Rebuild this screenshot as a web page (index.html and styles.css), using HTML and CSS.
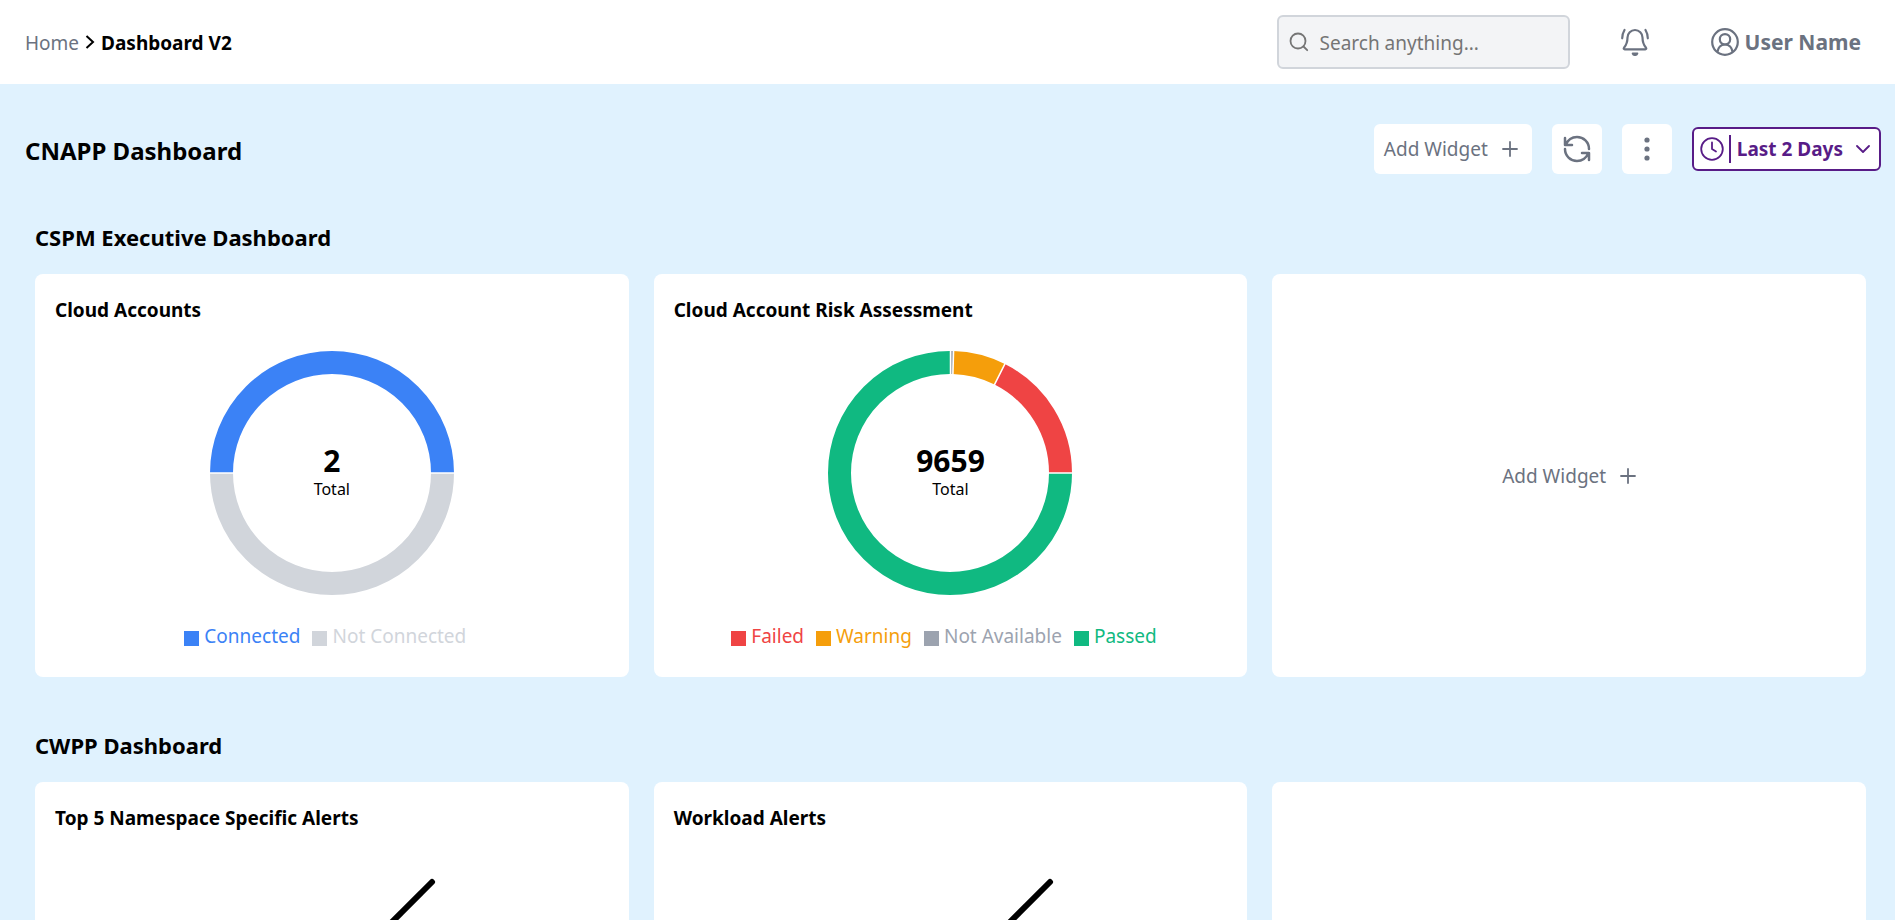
FILE: index.html
```html
<!DOCTYPE html>
<html lang="en">
<head>
<meta charset="utf-8">
<meta name="viewport" content="width=device-width, initial-scale=1">
<title>Dashboard V2</title>
<link rel="stylesheet" href="styles.css">
</head>
<body>
<header class="topbar">
  <nav class="breadcrumb" aria-label="Breadcrumb">
    <a class="crumb" href="#">Home</a>
    <svg class="crumb-arrow" viewBox="0 0 10 16" aria-hidden="true"><path d="M1.500 1 8 7 1.500 13" fill="none" stroke="currentColor" stroke-width="2"/></svg>
    <span class="crumb-current">Dashboard V2</span>
  </nav>
  <div class="topbar-tools">
    <label class="search">
      <svg class="icon-search" viewBox="0 0 20 20" fill="none" stroke="currentColor" stroke-width="1.800" stroke-linecap="round" aria-hidden="true"><circle cx="9" cy="9" r="7.500"/><path d="m14.500 14.500 3.700 3.700"/></svg>
      <input class="search-input" type="text" placeholder="Search anything..." aria-label="Search anything">
    </label>
    <button class="bell" type="button" aria-label="Notifications">
      <svg class="icon-28" viewBox="0 0 28 28" fill="none" stroke="currentColor" stroke-width="2.200" stroke-linecap="round" stroke-linejoin="round" aria-hidden="true"><path d="M14 2a7.500 7.500 0 0 0-7.500 7.500c0 6-2 8.500-3.500 10.300-.6.8-.2 1.500.7 1.500h20.600c.9 0 1.300-.7.7-1.500-1.500-1.800-3.500-4.300-3.500-10.300A7.500 7.500 0 0 0 14 2z"/><path d="M3.500 2C2 4.500 1.200 7 1.200 10.300M24.500 2C26 4.500 26.800 7 26.800 10.300M11.800 25.500c.8 1.900 3.600 1.900 4.400 0z"/></svg>
    </button>
    <button class="user" type="button">
      <svg class="icon-28" viewBox="0 0 28 28" fill="none" stroke="currentColor" stroke-width="2.200" aria-hidden="true"><circle cx="14" cy="14" r="12.800"/><circle cx="14" cy="11.300" r="5.200"/><path d="M6.300 24.200c.8-4.700 3.800-7.700 7.700-7.700s6.900 3 7.700 7.700"/></svg>
      User Name
    </button>
  </div>
</header>
<main class="page">
  <div class="page-head">
    <h1 class="page-title">CNAPP Dashboard</h1>
    <div class="actions">
      <button class="action action-add" type="button">Add Widget
        <svg class="icon-plus" viewBox="0 0 16 16" stroke="currentColor" stroke-width="1.800" stroke-linecap="round" aria-hidden="true"><path d="M8 1v14M1 8h14"/></svg>
      </button>
      <button class="action action-icon" type="button" aria-label="Refresh">
        <svg class="icon-28" viewBox="0 0 28 28" fill="none" stroke="currentColor" stroke-width="2.500" stroke-linecap="round" stroke-linejoin="round" aria-hidden="true"><path d="M2 3v7h7M2.500 10C5 4.500 9 2 14 2c6.500 0 12 5 12 12M26 25v-7h-7M25.500 18C23 23.500 19 26 14 26 7.500 26 2 21 2 14"/></svg>
      </button>
      <button class="action action-icon" type="button" aria-label="More options">
        <svg class="icon-28" viewBox="0 0 28 28" fill="currentColor" aria-hidden="true"><circle cx="14" cy="5" r="2.600"/><circle cx="14" cy="14" r="2.600"/><circle cx="14" cy="23" r="2.600"/></svg>
      </button>
      <button class="range" type="button">
        <svg class="icon-clock" viewBox="0 0 24 24" fill="none" stroke="currentColor" stroke-width="1.800" stroke-linecap="round" stroke-linejoin="round" aria-hidden="true"><circle cx="12" cy="12" r="10.800"/><path d="M12 5.500V12l4 2.500"/></svg>
        <span class="range-label">Last 2 Days</span>
        <svg class="icon-down" viewBox="0 0 14 14" fill="none" stroke="currentColor" stroke-width="1.800" stroke-linecap="round" stroke-linejoin="round" aria-hidden="true"><path d="m1 4 6 6 6-6"/></svg>
      </button>
    </div>
  </div>

  <section class="group">
    <h2 class="group-title">CSPM Executive Dashboard</h2>
    <div class="cards">
      <article class="card">
        <h3 class="card-title">Cloud Accounts</h3>
        <div class="chart">
          <svg class="donut" viewBox="-122 -122 244 244" fill="none" stroke-width="23" role="img" aria-label="2 cloud accounts">
            <path d="M-110.500 0a110.500 110.500 0 0 1 221 0" stroke="#3b82f6"/>
            <path d="M110.500 0a110.500 110.500 0 0 1-221 0" stroke="#d1d5db"/>
            <path d="M-123 0h25M98 0h25" stroke="#fff" stroke-width="1.500"/>
          </svg>
          <div class="donut-label"><strong class="donut-value">2</strong><span class="donut-caption">Total</span></div>
        </div>
        <ul class="legend">
          <li class="legend-item blue">Connected</li>
          <li class="legend-item light">Not Connected</li>
        </ul>
      </article>
      <article class="card">
        <h3 class="card-title">Cloud Account Risk Assessment</h3>
        <div class="chart">
          <svg class="donut" viewBox="-122 -122 244 244" fill="none" stroke-width="23" role="img" aria-label="9659 risk assessments">
            <path d="M110.500 0A110.500 110.500 0 1 1 0-110.500" stroke="#10b981"/>
            <path d="M0-110.500A110.500 110.500 0 0 1 3-110.460" stroke="#9ca3af"/>
            <path d="M3-110.460A110.500 110.500 0 0 1 49.700-98.700" stroke="#f59e0b"/>
            <path d="M49.700-98.700A110.500 110.500 0 0 1 110.500 0" stroke="#ef4444"/>
            <path d="M98 0h25M.5-98v-25M2.900-98 3.600-123M44-87.400 55.300-109.800" stroke="#fff" stroke-width="1.500"/>
          </svg>
          <div class="donut-label"><strong class="donut-value">9659</strong><span class="donut-caption">Total</span></div>
        </div>
        <ul class="legend">
          <li class="legend-item red">Failed</li>
          <li class="legend-item amber">Warning</li>
          <li class="legend-item gray">Not Available</li>
          <li class="legend-item green">Passed</li>
        </ul>
      </article>
      <button class="card card-add" type="button">Add Widget
        <svg class="icon-plus" viewBox="0 0 16 16" stroke="currentColor" stroke-width="1.800" stroke-linecap="round" aria-hidden="true"><path d="M8 1v14M1 8h14"/></svg>
      </button>
    </div>
  </section>

  <section class="group">
    <h2 class="group-title">CWPP Dashboard</h2>
    <div class="cards">
      <article class="card">
        <h3 class="card-title">Top 5 Namespace Specific Alerts</h3>
        <svg class="graph" viewBox="0 0 240 240" fill="none" stroke="#000" stroke-width="6" stroke-linecap="round" aria-hidden="true"><path d="M220 42 172 90"/></svg>
      </article>
      <article class="card">
        <h3 class="card-title">Workload Alerts</h3>
        <svg class="graph" viewBox="0 0 240 240" fill="none" stroke="#000" stroke-width="6" stroke-linecap="round" aria-hidden="true"><path d="M220 42 172 90"/></svg>
      </article>
      <article class="card"></article>
    </div>
  </section>
</main>
</body>
</html>
```
FILE: styles.css
```css
* { box-sizing: border-box; }

body {
  margin: 0;
  height: 100vh;
  overflow: hidden;
  background: #e0f2fe;
  color: #000;
  font-family: "Noto Sans", "Open Sans", sans-serif;
  font-size: 19px;
  line-height: 28px;
}

h1, h2, h3, ul { margin: 0; padding: 0; font-weight: 700; }
button, input { font: inherit; color: inherit; }
button { border: 0; background: none; padding: 0; cursor: pointer; }
svg { display: block; flex: none; }

.topbar {
  display: flex;
  align-items: center;
  justify-content: space-between;
  padding: 15px 34px 15px 25px;
  background: #fff;
}
.breadcrumb { display: flex; align-items: center; gap: 6px; padding-top: 2px; }
.crumb { color: #6b7280; text-decoration: none; }
.crumb-arrow { width: 10px; height: 16px; }
.crumb-current { font-weight: 700; }

.topbar-tools { display: flex; align-items: center; color: #6b7280; }
.search {
  display: flex;
  align-items: center;
  gap: 11px;
  width: 293px;
  height: 54px;
  padding: 0 10px;
  border: 2px solid #d1d5db;
  border-radius: 6px;
  background: #f3f4f6;
  color: #757575;
}
.icon-search { width: 20px; height: 20px; }
.search-input { flex: 1; min-width: 0; padding: 2px 0 0; border: 0; outline: 0; background: none; }
.search-input::placeholder { color: #757575; opacity: 1; }
.icon-28 { width: 28px; height: 28px; }
.bell { margin: 0 62px 0 51px; }
.user { display: flex; align-items: center; gap: 6px; font-size: 21px; font-weight: 700; }

.page { padding: 40px 14px 0 25px; }
.page-head { display: flex; align-items: center; justify-content: space-between; }
.page-title { padding-top: 3px; font-size: 24px; line-height: 32px; }
.actions { display: flex; align-items: center; gap: 20px; }
.action {
  display: flex;
  align-items: center;
  justify-content: center;
  height: 50px;
  border-radius: 6px;
  background: #fff;
  color: #6b7280;
}
.action-add { gap: 14px; padding: 0 14px 0 10px; }
.action-icon { width: 50px; }
.icon-plus { width: 16px; height: 16px; fill: none; }
.range {
  display: flex;
  align-items: center;
  height: 44px;
  padding: 0 9px 0 6px;
  border: 2px solid #581c87;
  border-radius: 6px;
  background: #fff;
  color: #581c87;
  font-weight: 700;
}
.icon-clock { width: 24px; height: 24px; }
.range-label { margin: 0 13px 0 5px; padding-left: 6px; border-left: 2px solid; }
.icon-down { width: 14px; height: 14px; }

.group { padding: 49px 15px 0 10px; }
.group + .group { padding-top: 54px; }
.group-title { margin-bottom: 23px; font-size: 22px; line-height: 28px; }
.cards { display: grid; grid-template-columns: repeat(3, 1fr); gap: 25px; }
.card { min-height: 403px; padding: 22px 20px; border-radius: 8px; background: #fff; }
.card-title { font-size: 19px; line-height: 28px; }
.card-add { display: flex; align-items: center; justify-content: center; gap: 14px; color: #6b7280; }

.chart { display: grid; justify-items: center; align-items: center; margin-top: 27px; }
.donut, .donut-label { grid-area: 1 / 1; }
.donut { width: 244px; height: 244px; }
.donut-label { display: flex; flex-direction: column; align-items: center; }
.donut-value { font-size: 30px; line-height: 32px; }
.donut-caption { font-size: 16px; line-height: 24px; }

.legend { display: flex; justify-content: center; gap: 12px; margin-top: 27px; padding-right: 13px; list-style: none; font-weight: 400; }
.legend-item { display: flex; align-items: center; gap: 5px; }
.legend-item::before { content: ""; width: 15px; height: 15px; margin-top: 4px; background: currentColor; }
.blue { color: #3b82f6; }
.light { color: #d1d5db; }
.red { color: #ef4444; }
.amber { color: #f59e0b; }
.gray { color: #9ca3af; }
.green { color: #10b981; }

.graph { width: 240px; height: 240px; margin: 8px auto 0; }
```
